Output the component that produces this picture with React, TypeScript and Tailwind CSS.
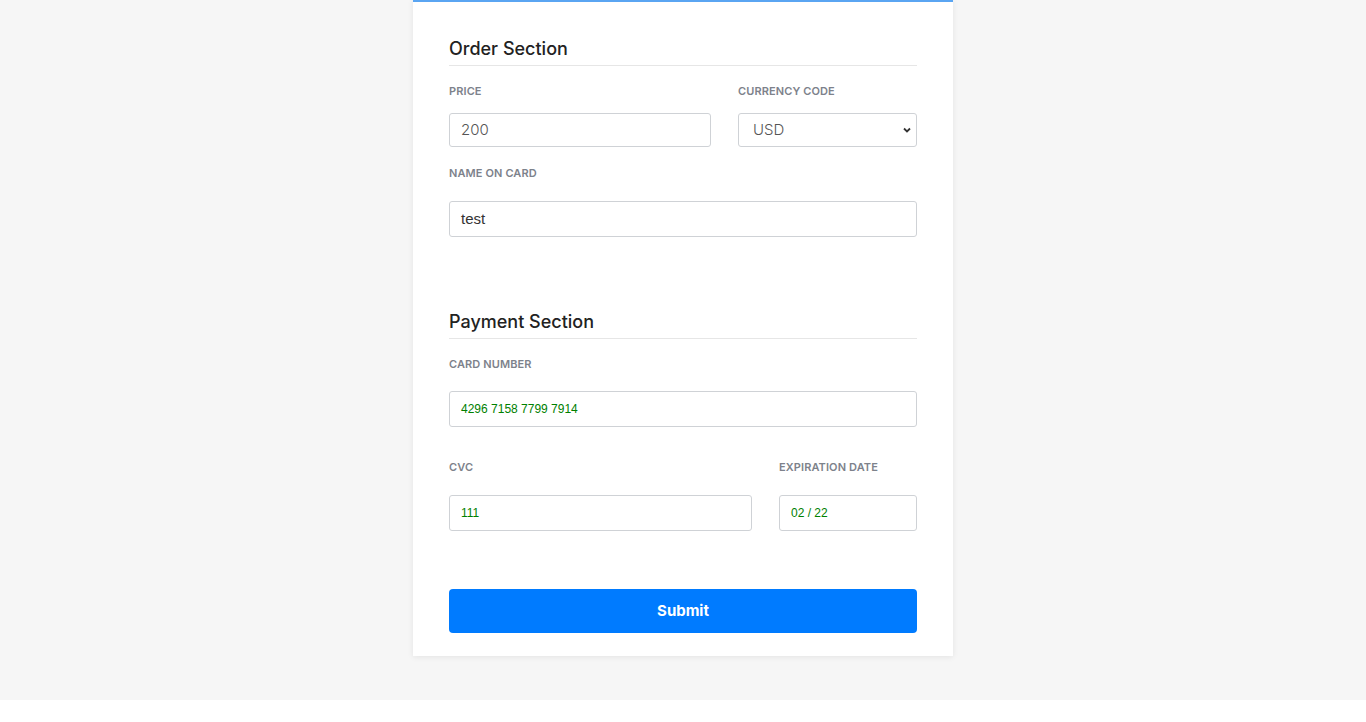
import React from "react";

const labelCls =
  "block text-[11px] font-semibold uppercase text-[#7d828b] tracking-[0.01em] leading-[14px]";
const font = { fontFamily: "Inter, 'Open Sans', sans-serif" };
const arial = { fontFamily: "'Liberation Sans', Arial, sans-serif" };

function Heading({ children }: { children: React.ReactNode }) {
  return (
    <div className="border-b border-[#e6e6e6] pb-[4px]">
      <h2 className="text-[18px] font-medium text-[#222] leading-[24px]" style={font}>
        {children}
      </h2>
    </div>
  );
}

export default function App() {
  return (
    <div className="min-h-[700px] bg-[#f6f6f6] flex justify-center" style={font}>
      <div className="w-[540px] h-[656px] bg-white border-t-2 border-[#5aa5f2] shadow-[0_1px_6px_rgba(0,0,0,0.08)] px-[36px] pt-[35px]">
        <Heading>Order Section</Heading>

        <div className="grid grid-cols-[262px_179px] gap-x-[27px] mt-[18px]">
          <div>
            <label className={labelCls}>Price</label>
            <div className="mt-[15px] h-[34px] border border-[#cfd2d6] rounded-[3px] flex items-center px-[11px] text-[15px] text-[#555] font-light">
              200
            </div>
          </div>
          <div>
            <label className={labelCls}>Currency Code</label>
            <div className="mt-[15px] h-[34px] border border-[#cfd2d6] rounded-[3px] flex items-center justify-between pl-[14px] pr-[4px] text-[15px] text-[#555] font-light">
              <span>USD</span>
              <svg width="10" height="10" viewBox="0 0 10 10">
                <path d="M2 3.5 L5 6.5 L8 3.5" fill="none" stroke="#333" strokeWidth="1.8" />
              </svg>
            </div>
          </div>
        </div>

        <div className="mt-[19px]">
          <label className={labelCls}>Name on card</label>
          <div
            className="mt-[21px] h-[36px] border border-[#cfd2d6] rounded-[3px] flex items-center px-[11px] text-[15px] text-[#333]"
            style={arial}
          >
            test
          </div>
        </div>

        <div className="mt-[73px]">
          <Heading>Payment Section</Heading>
        </div>

        <div className="mt-[18px]">
          <label className={labelCls}>Card Number</label>
          <div
            className="mt-[20px] h-[36px] border border-[#cfd2d6] rounded-[3px] flex items-center px-[11px] text-[12px] text-[#008000]"
            style={arial}
          >
            4296 7158 7799 7914
          </div>
        </div>

        <div className="grid grid-cols-[303px_138px] gap-x-[27px] mt-[33px]">
          <div>
            <label className={labelCls}>CVC</label>
            <div
              className="mt-[21px] h-[36px] border border-[#cfd2d6] rounded-[3px] flex items-center px-[11px] text-[12px] text-[#008000]"
              style={arial}
            >
              111
            </div>
          </div>
          <div>
            <label className={labelCls}>Expiration Date</label>
            <div
              className="mt-[21px] h-[36px] border border-[#cfd2d6] rounded-[3px] flex items-center px-[11px] text-[12px] text-[#008000]"
              style={arial}
            >
              02 / 22
            </div>
          </div>
        </div>

        <button className="mt-[58px] w-full h-[44px] bg-[#007bff] rounded-[4px] text-white text-[15px] font-bold" style={font}>
          Submit
        </button>
      </div>
    </div>
  );
}
